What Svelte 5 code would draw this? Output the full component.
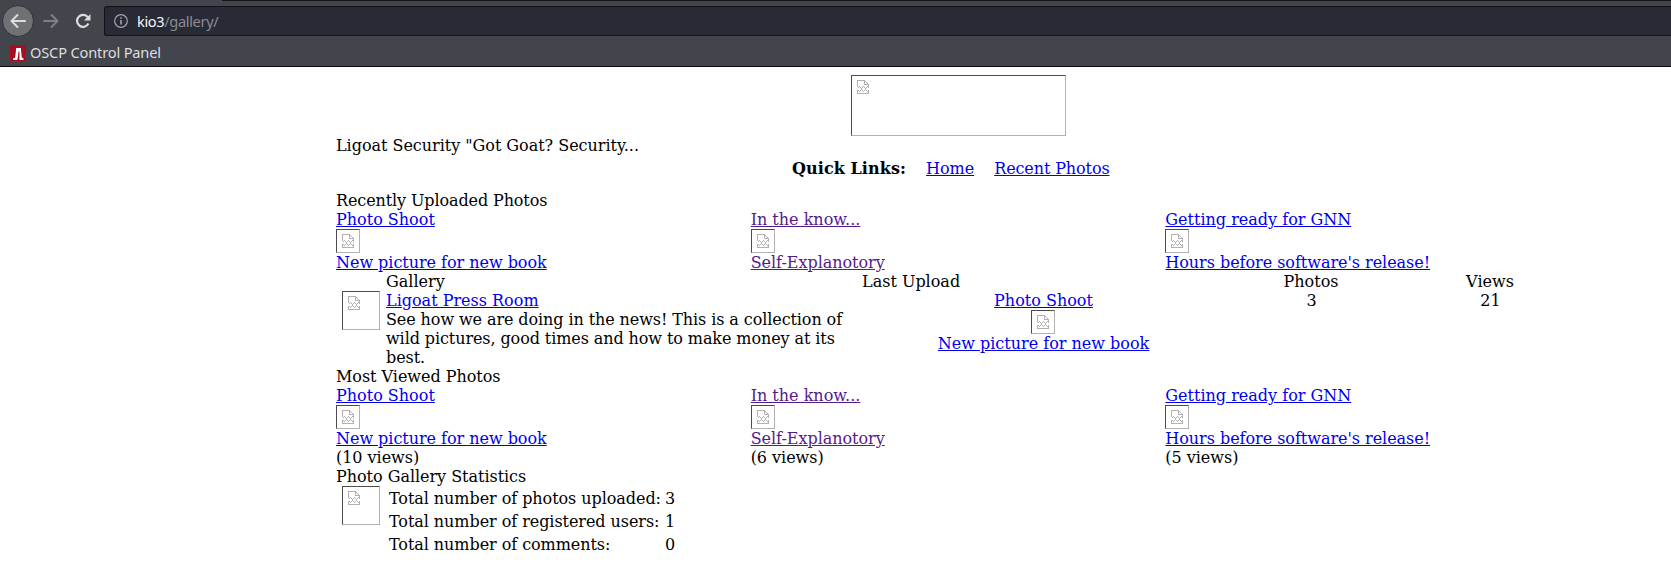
<script>
  const recent = [
    { title: 'Photo Shoot', caption: 'New picture for new book', views: 10 },
    { title: 'In the know...', caption: 'Self-Explanotory', views: 6, visited: true },
    { title: 'Getting ready for GNN', caption: "Hours before software's release!", views: 5 }
  ];
  const stats = [
    ['Total number of photos uploaded:', 3],
    ['Total number of registered users:', 1],
    ['Total number of comments:', 0]
  ];
</script>

{#snippet missing(kind)}
  <span class="missing {kind}">
    <svg width="12" height="14" viewBox="0 0 12 14" shape-rendering="crispEdges" fill="#b1b1b1">
      <path d="M0 0h8v1H0zM0 1h1v6H0zM7 1h1v4H7zM8 1h1v1H8zM9 2h1v1H9zM10 3h1v1h-1zM8 4h4v1H8zM11 4h1v4h-1zM1 7h1v1H1zM2 6h1v1H2zM3 7h1v1H3zM4 8h1v1H4zM5 7h1v1H5zM6 6h1v1H6zM7 7h1v1H7zM8 8h1v1H8zM9 7h1v1H9zM10 6h1v1h-1zM0 10h1v4H0zM1 10h1v1H1zM2 11h1v1H2zM3 10h1v1H3zM4 9h1v1H4zM5 10h1v1H5zM6 11h1v1H6zM7 10h1v1H7zM8 9h1v1H8zM9 10h1v1H9zM10 11h1v1h-1zM11 10h1v4h-1zM1 13h10v1H1z" />
    </svg>
  </span>
{/snippet}

{#snippet photos(showViews)}
  <div class="photos">
    {#each recent as photo}
      <div class="photo">
        <a href="#photo" class:visited={photo.visited}>{photo.title}</a>
        {@render missing('thumb')}
        <a href="#photo" class="caption" class:visited={photo.visited}>{photo.caption}</a>
        {#if showViews}<span class="views">({photo.views} views)</span>{/if}
      </div>
    {/each}
  </div>
{/snippet}

<header>
  <div class="tabline"><i></i></div>
  <div class="nav">
    <span class="back">
      <svg width="16" height="16" viewBox="0 0 16 16" fill="none" stroke="#dcdcdd" stroke-width="2" stroke-linecap="round" stroke-linejoin="round"><path d="M15 8H1.500M7.500 2L1.500 8l6 6" /></svg>
    </span>
    <svg class="forward" width="16" height="16" viewBox="0 0 16 16" fill="none" stroke="#7f8084" stroke-width="2" stroke-linecap="round" stroke-linejoin="round"><path d="M1 8h13.500M8.500 2l6 6-6 6" /></svg>
    <svg class="reload" width="16" height="16" viewBox="0 0 16 16" fill="none" stroke="#dcdcdd" stroke-width="2.200"><path d="M12.800 4.200A6 6 0 1 0 13.400 10.600" /><path d="M15.500 1v6.500H9z" fill="#dcdcdd" stroke="none" /></svg>
    <div class="url">
      <svg width="14" height="14" viewBox="0 0 14 14" fill="none" stroke="#a5a6aa"><circle cx="7" cy="7" r="6.300" stroke-width="1.200" /><path d="M7 6v4.500M7 3.300v1.500" stroke-width="1.600" /></svg>
      <span><b>kio3</b>/gallery/</span>
    </div>
  </div>
  <div class="bookmarks">
    <svg width="16" height="16" viewBox="0 0 16 16"><path fill="#a80d20" d="M0 0h16v16H0z" /><path fill="#fff" d="M6 3h5v2l.8 7.500 1.700 1V15H9.500V6.500h-1L7.800 13 7 15H3.200v-1.500l2-1L6 5z" /></svg>
    <span>OSCP Control Panel</span>
  </div>
</header>

<main>
  <div class="banner">{@render missing('logo')}</div>
  <div class="views">Ligoat Security "Got Goat? Security...</div>
  <nav class="quick">
    <strong>Quick Links:</strong>
    <a href="#home">Home</a>
    <a href="#recent" class="tight">Recent Photos</a>
  </nav>

  <div class="tight">Recently Uploaded Photos</div>
  {@render photos(false)}

  <div class="gallery">
    <div></div>
    <div>Gallery</div>
    <div>Last Upload</div>
    <div class="center">Photos</div>
    <div class="center">Views</div>
    <div class="icon">{@render missing('folder')}</div>
    <div class="about">
      <a href="#gallery">Ligoat Press Room</a><br />
      See how we are doing in the news! This is a collection of wild pictures, good times and how to make money at its best.
    </div>
    <div class="photo middle">
      <a href="#photo">Photo Shoot</a>
      {@render missing('thumb')}
      <a href="#photo">New picture for new book</a>
    </div>
    <div class="center count">3</div>
    <div class="center count">21</div>
  </div>

  <div class="caption">Most Viewed Photos</div>
  {@render photos(true)}

  <div class="caption">Photo Gallery Statistics</div>
  <div class="statistics">
    {@render missing('chart')}
    <div class="rows">
      {#each stats as [label, value]}
        <span>{label}</span><span>{value}</span>
      {/each}
    </div>
  </div>
</main>

<style>
  :global(body) { margin: 0; background: #fff; overflow: hidden; }
  header { height: 67px; box-sizing: border-box; background: #42454c; border-bottom: 1px solid #08080c; font: 15px/20px "Noto Sans", sans-serif; color: #dededf; }
  .tabline { height: 1px; display: flex; background: #42454c; }
  .tabline i { margin-left: 222px; flex: 1; background: #15161c; }
  .nav { height: 40px; display: flex; align-items: center; }
  .back { width: 32px; height: 32px; box-sizing: border-box; margin-left: 2px; border: 1px solid #303238; border-radius: 50%; background: #6f7175; display: flex; align-items: center; justify-content: center; }
  .forward { margin-left: 9px; }
  .reload { margin-left: 16px; }
  .url { flex: 1; height: 30px; box-sizing: border-box; margin-left: 13px; border: 1px solid #111319; border-right: 0; border-radius: 3px 0 0 3px; background: #282a35; display: flex; align-items: center; padding-left: 9px; gap: 9px; font-size: 14.600px; letter-spacing: -0.360px; color: #8b8c92; }
  .url b { font-weight: 400; color: #f5f5f5; }
  .bookmarks { height: 24px; display: flex; align-items: center; gap: 4px; padding: 0 0 0 10px; font-size: 14.600px; letter-spacing: -0.160px; }
  .bookmarks svg { margin-top: 0; }
  .bookmarks span { margin-top: -3px; }

  main { width: 1244px; margin: 8px 0 0 336px; font: 16px/19px "DejaVu Serif", serif; color: #000; }
  a { color: #0000ee; text-decoration: underline; }
  a.visited { color: #551a8b; }
  .caption { letter-spacing: -0.035px; }
  .views { letter-spacing: -0.030px; }
  .tight { letter-spacing: -0.110px; }
  .missing { display: block; box-sizing: border-box; flex: none; border: 1px solid #b1b1b1; border-top-color: #4d4d4d; border-left-color: #4d4d4d; padding: 4px 0 0 5px; }
  .missing svg { display: block; }
  .logo { width: 215px; height: 61px; }
  .thumb { width: 24px; height: 24px; }
  .folder, .chart { width: 38px; height: 39px; }
  .banner { display: flex; justify-content: center; }
  .quick { display: flex; gap: 20px; padding: 4px 0 13px 456px; }
  .quick strong { letter-spacing: 0.080px; }
  .photos { display: grid; grid-template-columns: repeat(3, 1fr); }
  .photo { display: flex; flex-direction: column; align-items: flex-start; }
  .middle { align-items: center; }
  .middle .missing { margin-right: 1px; }
  .gallery { display: grid; grid-template-columns: 50px 476px 363px 172px 186px; }
  .icon { padding-left: 6px; }
  .about { padding-right: 10px; letter-spacing: -0.090px; }
  .about a { letter-spacing: 0; }
  .center { text-align: center; }
  .count { padding-left: 1px; }
  .statistics { display: flex; padding-left: 6px; }
  .rows { display: grid; grid-template-columns: 276px auto; grid-auto-rows: 23px; line-height: 23px; padding: 1px 0 0 9px; letter-spacing: -0.060px; }
</style>
